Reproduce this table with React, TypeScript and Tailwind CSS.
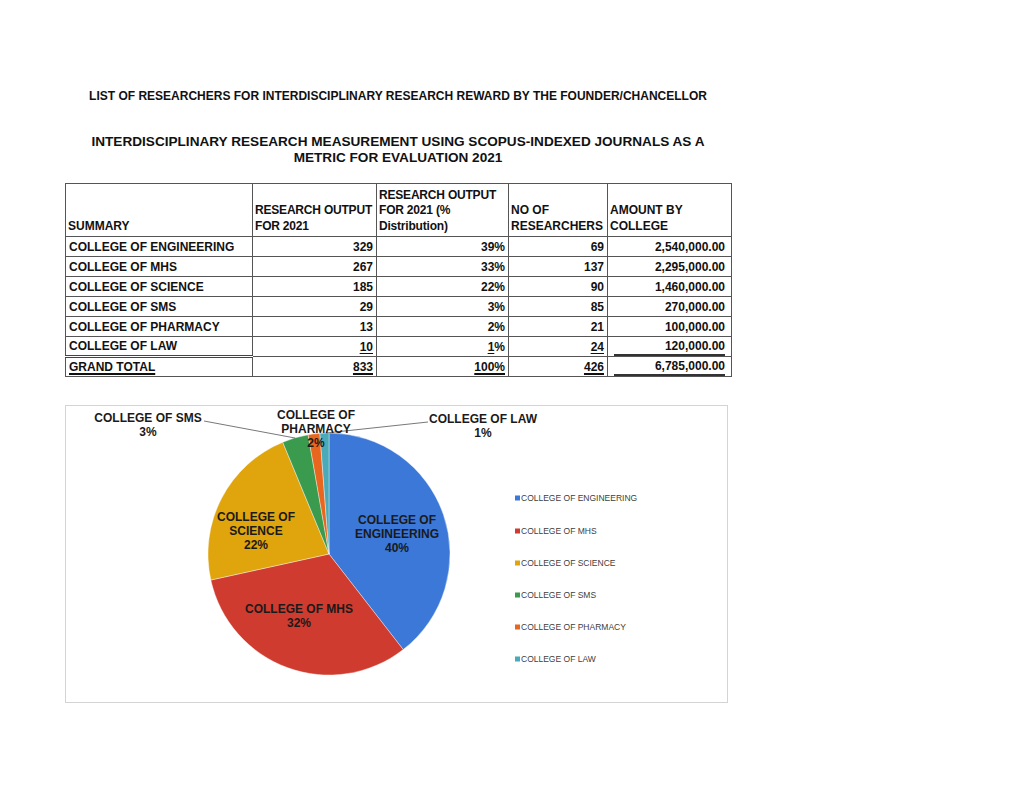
import React from "react";

const rows = [
    { name: "COLLEGE OF ENGINEERING", out: "329", pct: "39%", res: "69", amt: "2,540,000.00" },
    { name: "COLLEGE OF MHS", out: "267", pct: "33%", res: "137", amt: "2,295,000.00" },
    { name: "COLLEGE OF SCIENCE", out: "185", pct: "22%", res: "90", amt: "1,460,000.00" },
    { name: "COLLEGE OF SMS", out: "29", pct: "3%", res: "85", amt: "270,000.00" },
    { name: "COLLEGE OF PHARMACY", out: "13", pct: "2%", res: "21", amt: "100,000.00" },
];

const slices = [
    { name: "COLLEGE OF ENGINEERING", value: 329, color: "#3b78d8" },
    { name: "COLLEGE OF MHS", value: 267, color: "#cf3b2f" },
    { name: "COLLEGE OF SCIENCE", value: 185, color: "#e0a40c" },
    { name: "COLLEGE OF SMS", value: 29, color: "#3a9a4d" },
    { name: "COLLEGE OF PHARMACY", value: 13, color: "#e8661d" },
    { name: "COLLEGE OF LAW", value: 10, color: "#4aaab8" },
];

const cx = 329;
const cy = 554;
const r = 121;

function slicePaths() {
    const total = slices.reduce((s, x) => s + x.value, 0);
    let start = 0;
    return slices.map((s) => {
        const a0 = (start / total) * Math.PI * 2;
        start += s.value;
        const a1 = (start / total) * Math.PI * 2;
        const x0 = cx + r * Math.sin(a0);
        const y0 = cy - r * Math.cos(a0);
        const x1 = cx + r * Math.sin(a1);
        const y1 = cy - r * Math.cos(a1);
        const large = a1 - a0 > Math.PI ? 1 : 0;
        return {
            ...s,
            d: `M${cx} ${cy} L${x0} ${y0} A${r} ${r} 0 ${large} 1 ${x1} ${y1} Z`,
        };
    });
}

const td = "border border-[#555] px-[3px] h-[20px] leading-[18px]";
const th = "border border-[#555] px-[2px] align-bottom text-left font-bold leading-[15.5px] pb-[2px] whitespace-nowrap";

const Label = ({ x, y, lines }: { x: number; y: number; lines: string[] }) => (
    <text
        x={x}
        y={y}
        textAnchor="middle"
        fontSize="12"
        fontWeight="bold"
        fill="#1a1a1a"
        fontFamily="'Liberation Sans', Arial, sans-serif"
    >
        {lines.map((l, i) => (
            <tspan key={i} x={x} dy={i === 0 ? 0 : 14}>
                {l}
            </tspan>
        ))}
    </text>
);

const App = () => {
    const legendY = [498, 531, 563, 595, 627, 659];
    return (
        <div className="w-[1024px] h-[791px] bg-white text-[#111] font-['Liberation_Sans',Arial,sans-serif]">
            <div className="ml-[65px] w-[666px] flex flex-col">
                <div className="pt-[89px] text-center text-[12px] font-bold leading-[14px] whitespace-nowrap">
                    LIST OF RESEARCHERS FOR INTERDISCIPLINARY RESEARCH REWARD BY THE FOUNDER/CHANCELLOR
                </div>

                <div className="mt-[31px] text-center text-[13.6px] font-bold leading-[16px] whitespace-nowrap">
                    INTERDISCIPLINARY RESEARCH MEASUREMENT USING SCOPUS-INDEXED JOURNALS AS A
                    <br />
                    METRIC FOR EVALUATION 2021
                </div>

                <table className="mt-[17px] border-collapse table-fixed w-[666px] text-[12px] font-bold">
                    <colgroup>
                        <col className="w-[187px]" />
                        <col className="w-[124px]" />
                        <col className="w-[132px]" />
                        <col className="w-[99px]" />
                        <col className="w-[124px]" />
                    </colgroup>
                    <thead>
                        <tr className="h-[53px]">
                            <th className={th}>SUMMARY</th>
                            <th className={`${th} tracking-[-0.2px]`}>
                                RESEARCH OUTPUT
                                <br />
                                FOR 2021
                            </th>
                            <th className={`${th} tracking-[-0.2px]`}>
                                RESEARCH OUTPUT
                                <br />
                                FOR 2021 (%
                                <br />
                                Distribution)
                            </th>
                            <th className={th}>
                                NO OF
                                <br />
                                RESEARCHERS
                            </th>
                            <th className={th}>
                                AMOUNT BY
                                <br />
                                COLLEGE
                            </th>
                        </tr>
                    </thead>
                    <tbody>
                        {rows.map((row) => (
                            <tr key={row.name}>
                                <td className={td}>{row.name}</td>
                                <td className={`${td} text-right`}>{row.out}</td>
                                <td className={`${td} text-right`}>{row.pct}</td>
                                <td className={`${td} text-right`}>{row.res}</td>
                                <td className={`${td} text-right pr-[6px]`}>{row.amt}</td>
                            </tr>
                        ))}
                        <tr>
                            <td className={`${td} border-b-[3px] border-b-[#444] border-double`}>COLLEGE OF LAW</td>
                            <td className={`${td} text-right`}>
                                <span className="underline underline-offset-2">10</span>
                            </td>
                            <td className={`${td} text-right`}>
                                <span className="underline underline-offset-2">1</span>%
                            </td>
                            <td className={`${td} text-right`}>
                                <span className="underline underline-offset-2">24</span>
                            </td>
                            <td className={`${td} text-right pr-[6px]`}>
                                <div className="ml-[3px] border-b-2 border-[#333] leading-[16px]">120,000.00</div>
                            </td>
                        </tr>
                        <tr>
                            <td className={td}>
                                <span className="underline underline-offset-2 decoration-2">GRAND TOTAL</span>
                            </td>
                            <td className={`${td} text-right`}>
                                <span className="underline underline-offset-2 decoration-2">833</span>
                            </td>
                            <td className={`${td} text-right`}>
                                <span className="underline underline-offset-2 decoration-2">100%</span>
                            </td>
                            <td className={`${td} text-right`}>
                                <span className="underline underline-offset-2 decoration-2">426</span>
                            </td>
                            <td className={`${td} text-right pr-[6px]`}>
                                <div className="ml-[3px] border-b-2 border-[#333] leading-[16px]">6,785,000.00</div>
                            </td>
                        </tr>
                    </tbody>
                </table>

                <div className="mt-[28px] w-[663px] h-[298px] border border-[#d4d4d4]">
                    <svg width="661" height="296" viewBox="66 406 661 296" className="block">
                        {slicePaths().map((s) => (
                            <path key={s.name} d={s.d} fill={s.color} stroke="#ffffff" strokeWidth="0.4" />
                        ))}

                        <polyline points="204,421 295,438" fill="none" stroke="#555" strokeWidth="0.8" />
                        <polyline points="428,422 326,433" fill="none" stroke="#555" strokeWidth="0.8" />

                        <Label x={148} y={422} lines={["COLLEGE OF SMS", "3%"]} />
                        <Label x={316} y={419} lines={["COLLEGE OF", "PHARMACY", "2%"]} />
                        <Label x={483} y={423} lines={["COLLEGE OF LAW", "1%"]} />
                        <Label x={397} y={524} lines={["COLLEGE OF", "ENGINEERING", "40%"]} />
                        <Label x={256} y={521} lines={["COLLEGE OF", "SCIENCE", "22%"]} />
                        <Label x={299} y={613} lines={["COLLEGE OF MHS", "32%"]} />

                        {slices.map((s, i) => (
                            <g key={s.name}>
                                <rect x={515} y={legendY[i] - 2.5} width={5} height={5} fill={s.color} />
                                <text
                                    x={521}
                                    y={legendY[i] + 3}
                                    fontSize="8.5"
                                    fill="#404040"
                                    fontFamily="'Liberation Sans', Arial, sans-serif"
                                >
                                    {s.name}
                                </text>
                            </g>
                        ))}
                    </svg>
                </div>
            </div>
        </div>
    );
};

export default App;
